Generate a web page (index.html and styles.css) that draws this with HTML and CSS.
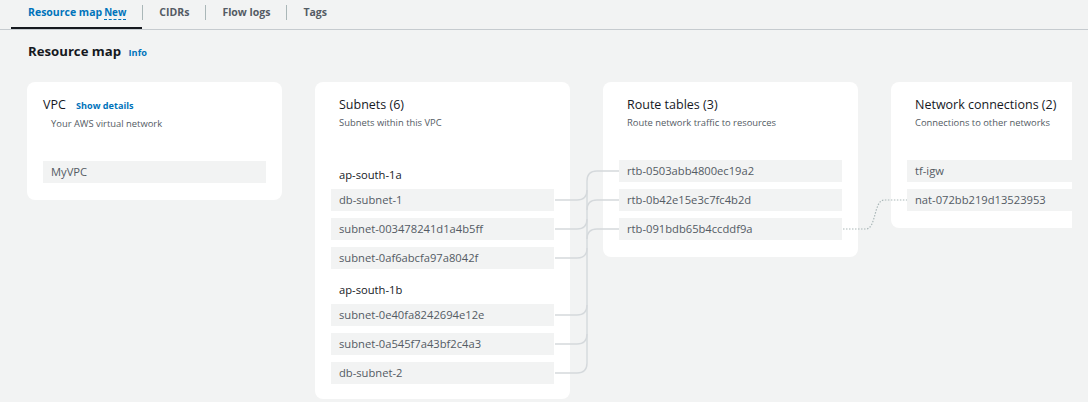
FILE: index.html
```html
<!DOCTYPE html>
<html lang="en">
<head>
<meta charset="utf-8">
<title>Resource map</title>
<link rel="stylesheet" href="styles.css">
</head>
<body>
<nav class="tabs">
  <a class="tab tab-active">Resource map<span class="new">New</span></a>
  <span class="tab-sep"></span>
  <a class="tab">CIDRs</a>
  <span class="tab-sep"></span>
  <a class="tab">Flow logs</a>
  <span class="tab-sep"></span>
  <a class="tab">Tags</a>
</nav>

<h2 class="heading">Resource map <a class="info">Info</a></h2>

<div class="map-viewport">
  <div class="map">
    <section class="card card-vpc">
      <div class="card-head">
        <div class="card-title">VPC <a class="details">Show details</a></div>
        <div class="card-sub">Your AWS virtual network</div>
      </div>
      <div class="row">MyVPC</div>
    </section>

    <section class="card card-subnets">
      <div class="card-head">
        <div class="card-title">Subnets (6)</div>
        <div class="card-sub">Subnets within this VPC</div>
      </div>
      <div class="group">
        <div class="group-label">ap-south-1a</div>
        <div class="row">db-subnet-1</div>
        <div class="row">subnet-003478241d1a4b5ff</div>
        <div class="row">subnet-0af6abcfa97a8042f</div>
      </div>
      <div class="group">
        <div class="group-label">ap-south-1b</div>
        <div class="row">subnet-0e40fa8242694e12e</div>
        <div class="row">subnet-0a545f7a43bf2c4a3</div>
        <div class="row">db-subnet-2</div>
      </div>
    </section>

    <section class="card">
      <div class="card-head">
        <div class="card-title">Route tables (3)</div>
        <div class="card-sub">Route network traffic to resources</div>
      </div>
      <div class="row">rtb-0503abb4800ec19a2</div>
      <div class="row">rtb-0b42e15e3c7fc4b2d</div>
      <div class="row">rtb-091bdb65b4ccddf9a</div>
    </section>

    <section class="card">
      <div class="card-head">
        <div class="card-title">Network connections (2)</div>
        <div class="card-sub">Connections to other networks</div>
      </div>
      <div class="row">tf-igw</div>
      <div class="row">nat-072bb219d13523953</div>
    </section>

    <svg class="links" width="1119" height="320" viewBox="0 0 1119 320" aria-hidden="true">
      <g class="link">
        <path d="M560 99 V281"/>
        <path d="M560 99 Q560 89 570 89 H592"/>
        <path d="M560 128 Q560 118 570 118 H592"/>
        <path d="M560 157 Q560 147 570 147 H592"/>
        <path d="M528 118 H550 Q560 118 560 108"/>
        <path d="M528 147 H550 Q560 147 560 137"/>
        <path d="M528 176 H550 Q560 176 560 166"/>
        <path d="M528 233 H550 Q560 233 560 223"/>
        <path d="M528 262 H550 Q560 262 560 252"/>
        <path d="M528 291 H550 Q560 291 560 281"/>
      </g>
      <path class="link-dot" d="M816 147 H839 C849 147 847 118 857 118 H880"/>
    </svg>
  </div>
</div>
</body>
</html>
```

FILE: styles.css
```css
* { box-sizing: border-box; }

html, body {
  margin: 0;
  background: #f2f3f3;
  font-family: "Open Sans", "Noto Sans", sans-serif;
  color: #16191f;
  overflow: hidden;
}

a { text-decoration: none; }

.tabs {
  display: flex;
  align-items: flex-start;
  height: 30px;
  padding-left: 11px;
  border-bottom: 1px solid #c6cbcf;
}

.tab {
  padding: 3px 16px 0;
  height: 29px;
  font-size: 10.5px;
  line-height: 18px;
  font-weight: 700;
  color: #545b64;
}

.tab-active {
  padding-left: 17px;
  color: #0073bb;
  box-shadow: inset 0 -2px 0 #16191f;
}

.new {
  margin-left: 2px;
  font-size: 9.8px;
  border-bottom: 1px dashed #0073bb;
}

.tab-sep {
  width: 1px;
  height: 15px;
  margin-top: 5px;
  background: #aab7b8;
}

.heading {
  margin: 11px 0 0;
  padding-left: 28px;
  font-size: 13.2px;
  line-height: 20px;
  font-weight: 700;
}

.info {
  margin-left: 4px;
  font-size: 9.2px;
  font-weight: 700;
  color: #0073bb;
}

.map-viewport {
  margin-top: 19px;
  width: 1072px;
  overflow: hidden;
  padding-left: 27px;
}

.map {
  position: relative;
  display: flex;
  align-items: flex-start;
  gap: 33px;
  width: 1119px;
}

.card {
  flex: 0 0 255px;
  background: #fff;
  border-radius: 8px;
  padding: 14px 16px 17px;
}

.card-subnets { padding-bottom: 15px; }

.card-head {
  padding-left: 8px;
  margin-bottom: 30px;
}

.card-vpc .card-head { padding-left: 0; }
.card-vpc .card-sub { padding-left: 8px; }

.card-title {
  font-size: 12.5px;
  line-height: 18px;
  color: #16191f;
}

.details {
  margin-left: 7px;
  font-size: 9.1px;
  font-weight: 700;
  color: #0073bb;
}

.card-sub {
  margin-top: 2px;
  font-size: 9.4px;
  line-height: 14px;
  color: #545b64;
}

.row {
  height: 22px;
  padding-left: 8px;
  background: #f2f3f3;
  font-size: 11.2px;
  line-height: 22px;
  color: #545b64;
  white-space: nowrap;
}

.row + .row { margin-top: 7px; }

.group + .group { margin-top: 6px; }

.group-label {
  padding: 5px 8px 0;
  margin-bottom: 4px;
  font-size: 11.2px;
  line-height: 20px;
  color: #16191f;
}

.links {
  position: absolute;
  left: 0;
  top: 0;
  pointer-events: none;
  overflow: visible;
}

.link path {
  fill: none;
  stroke: #d5d9dc;
  stroke-width: 1.4;
}

.link-dot {
  fill: none;
  stroke: #aab7b8;
  stroke-width: 1.2;
  stroke-dasharray: 1.5 1.5;
}
```
